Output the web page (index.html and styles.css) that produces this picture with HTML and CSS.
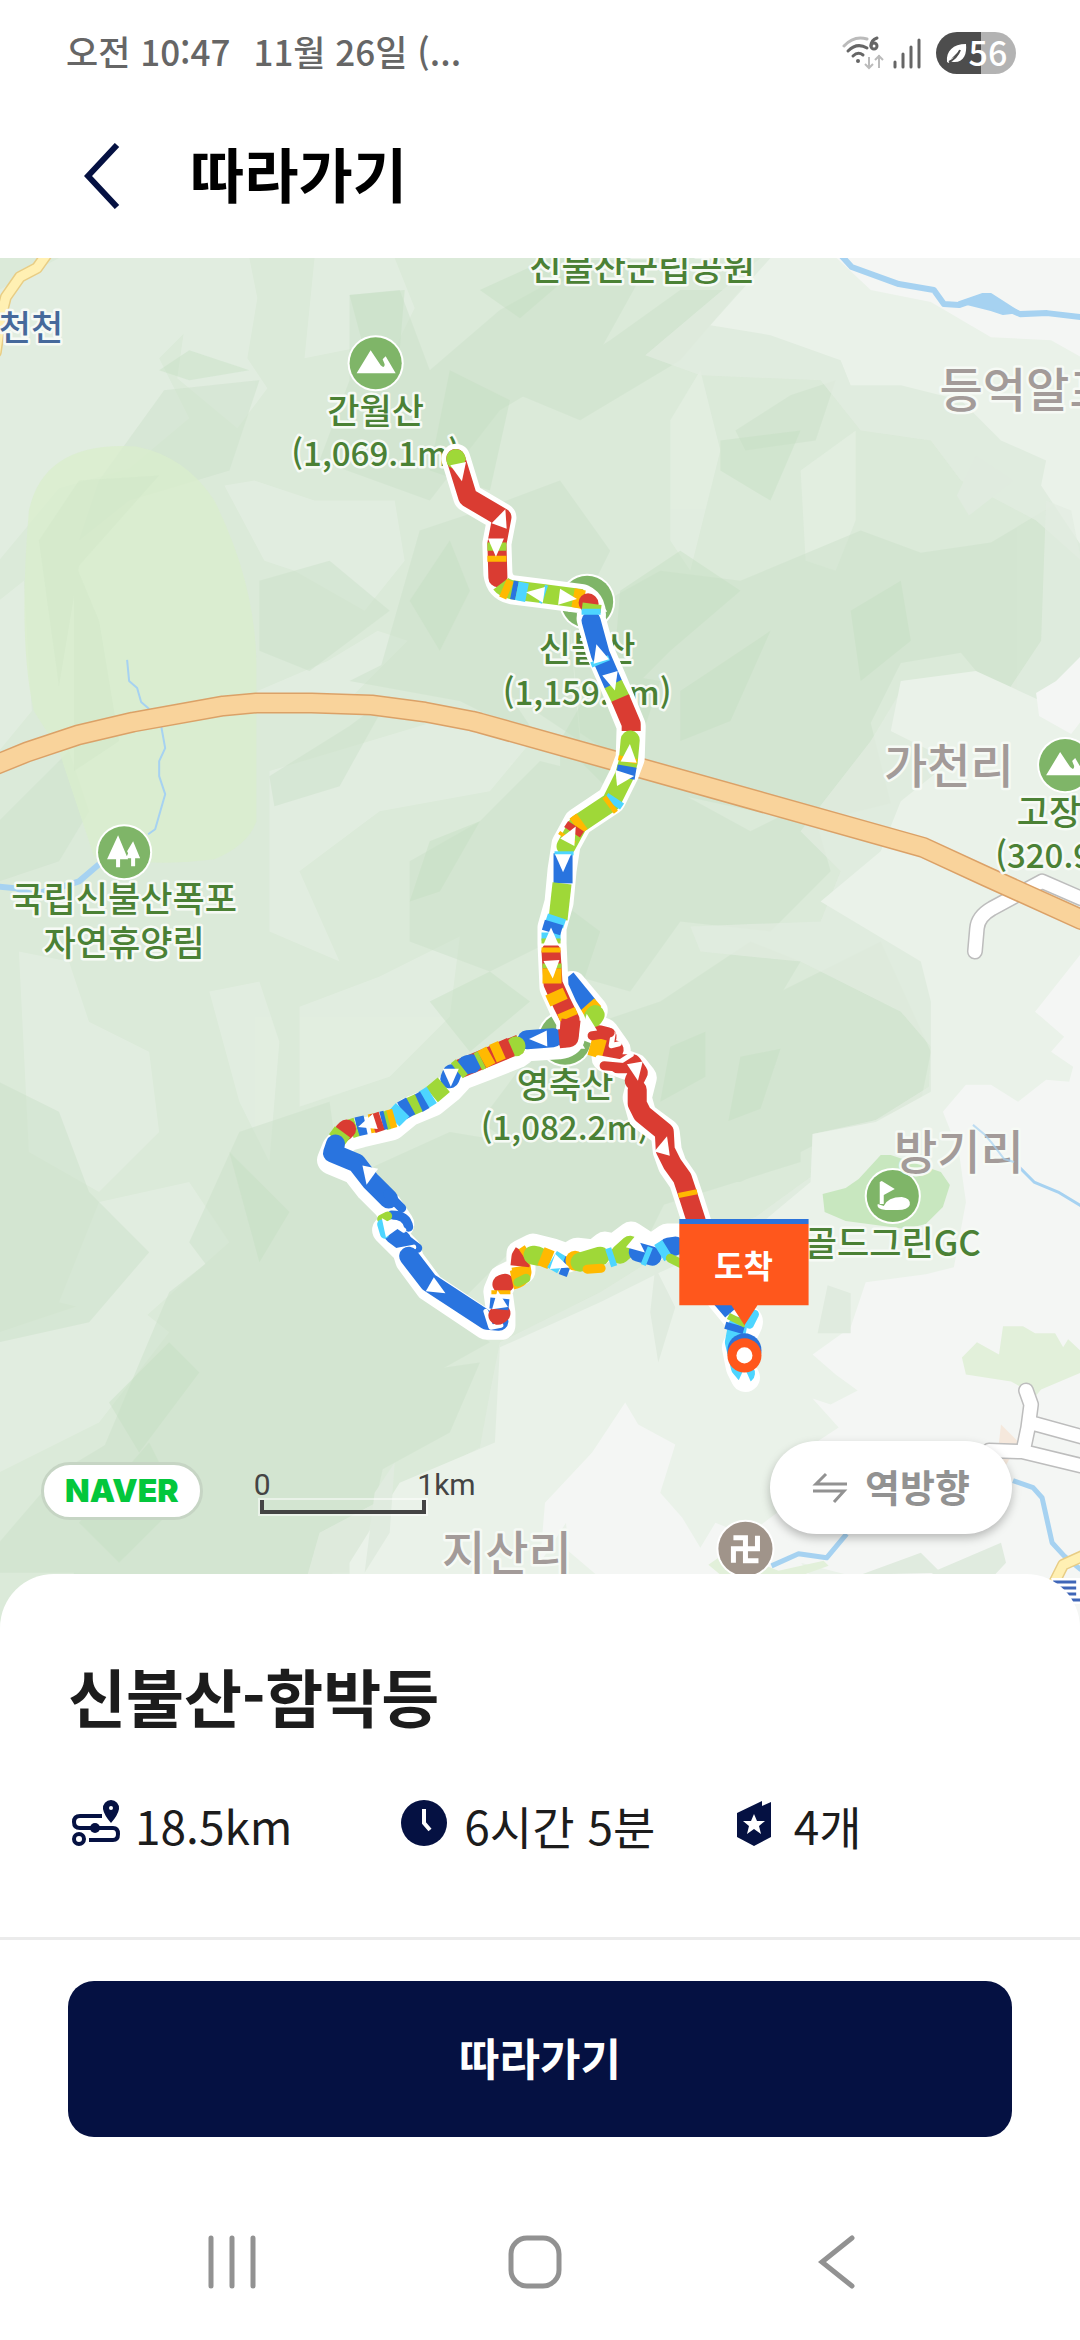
FILE: index.html
```html
<!DOCTYPE html>
<html lang="ko">
<head>
    <meta charset="UTF-8">
    <meta name="viewport" content="width=device-width, initial-scale=1.0">
    <title>따라가기</title>
    <link rel="stylesheet" href="styles.css">
</head>
<body>
    <div class="status-bar">
        <div class="status-time"><span>오전 10:47</span><span>11월 26일 (...</span></div>
        <div class="status-icons">
            <svg class="wifi" viewBox="0 0 42 36" aria-hidden="true">
                <g fill="none" stroke="#666" stroke-width="3" stroke-linecap="round">
                    <path d="M2 11Q12 0 25 4" stroke="#bbb"/>
                    <path d="M6 16Q15 7 25 13"/>
                    <path d="M11 21Q16 16 21 20"/>
                    <path d="M35 3Q29 5 29 11" />
                    <circle cx="32" cy="11" r="3"/>
                </g>
                <circle cx="16" cy="26" r="2" fill="#666"/>
                <path d="M27 22v11m-4-4 4 4 4-4M37 33V20m-4 5 4-4 4 4" fill="none" stroke="#bbb" stroke-width="2"/>
            </svg>
            <svg class="signal" viewBox="0 0 28 32" aria-hidden="true">
                <path d="M2 25v5M10 17v13M18 10v20M26 3v27" stroke="#666" stroke-width="3" stroke-linecap="round"/>
            </svg>
            <div class="battery">
                <svg viewBox="0 0 24 24" aria-hidden="true">
                    <path d="M2 21C1 10 8 3 21 3c1 10-2 19-13 18l-3-1-1 2zM6 18Q13 15 15 9" fill="#fff"/>
                    <path d="M4 21Q12 17 15 9" fill="none" stroke="#4d4d4d" stroke-width="2"/>
                </svg>
                <span>56</span>
            </div>
        </div>
    </div>

    <header class="header">
        <button class="back-btn" aria-label="뒤로">
            <svg viewBox="0 0 36 66" aria-hidden="true"><path d="M33 2 4 33l29 31" fill="none" stroke="#051142" stroke-width="6"/></svg>
        </button>
        <h1>따라가기</h1>
    </header>

    <main class="map">
        <svg class="map-canvas" viewBox="0 258 1080 1374" preserveAspectRatio="xMidYMin slice" role="img" aria-label="등산 경로 지도">
            <defs>
                <path id="arrow" d="M0-10 8 8H-8z" fill="#fff"/>
                <g id="poi">
                    <circle r="28" fill="#fff"/>
                    <circle r="26" fill="#7fb568"/>
                </g>
                <g id="peak">
                    <use href="#poi"/>
                    <path d="M-19 10-5-13 5 2Q9 6 9 1L7-4l3-3 10 17z" fill="#fff"/>
                </g>
            </defs>

            <!-- terrain -->
            <rect y="258" width="1080" height="1374" fill="#dbead9"/>
            <g class="light">
                <path d="M0 290 60 258h130l10 60-40 40 30 60-60 50-70 20L0 560z"/>
                <path d="M190 258h60l8 40-10 60 20 30-30 40-60-50 10-70z"/>
                <path d="M315 258h80l20 50-30 60-30-20-50 10 5-50z"/>
                <path d="M225 485l30-5 60 20 80 0 10 60-40 50-70-40-30-10z"/>
                <path d="M258 690l70-30 50-30 30 10-60 60-90 10z"/>
                <path d="M270 770l200-60 70 20-50 60-110 20-80 60 40 90-70-30z"/>
                <path d="M210 990l50-10 20 60-10 120-30-60zM300 1005l80-30 80-40-10 80-60 60-90 30z"/>
                <path d="M20 950l50 10 20 60 60 30 10 80-60 60-70-40z"/>
                <path d="M100 1200l90-20 40 60-90 80-80-20z"/>
                <path d="M0 1330l120-40 50 40-70 90-100 50z"/>
                <path d="M670 420l30-50 20 80-30 120-20-30zM800 470l55-40 0 90-20 50-30-10z"/>
                <path d="M0 600l25-20 8 130-33 40z"/>
            </g>
            <g class="dark">
                <path d="M165 390l95-10-30 90-100 30-50 40 20-60z"/>
                <path d="M350 295l50-5 30 80 70-60 90-50h60l-50 90-100 60-70 90-110-40 30-80z"/>
                <path d="M420 530l60-20 80-30 50 70-40 80 10 110-60-40-90-40-50 10z"/>
                <path d="M260 580l70-20 60 50-80 60-50-20z"/>
                <path d="M350 680l120-60 30 60 40 60-80-40z"/>
                <path d="M270 775l80-50 40-30-50 90-65 20z"/>
                <path d="M410 860l70-40 60-60 80 20-60 80-10 80-60 30-80-30z"/>
                <path d="M560 750l80 20 110 60 60-30 20 70-60 60-90-10-50 70-70-20z"/>
                <path d="M570 620l90-50 80 10 120-50 60 22 70-10 100-60 20 30v110l-30 70-70 20-50-60-60 10-30 60 20 80-80 20-140-30-90-60z"/>
                <path d="M540 1040l120-40 90-60 50 20-60 100 60 40 0 60-160 50-70-30-90-60z"/>
                <path d="M740 1010l140-70 50 110-10 50-100 40-80 40-60 0z"/>
                <path d="M340 1180l110-50 120 20 100 40-30 60-130 0-60 60-80-60z"/>
                <path d="M0 1080l60 30 30 80 60 60-60 70-90 20z"/>
                <path d="M240 1130l90-30 10 70 60 100 90 70-90 50-40 180H0v-30l60-70 100-60 90-90-60-80z"/>
                <path d="M170 1290l90-70 90 90 60 60 70-10-30 70-110 60-10 110H70l20-120z"/>
                <path d="M0 820l70-70 20 60-30 50-60 20z"/>
                <path d="M520 395l90-55 70-50 60 0-60 70-100 60zM735 430l55-35 45-15-20 60-70 10z"/>
            </g>
            <g class="darker">
                <path d="M350 295l55-5-5 60-30 20zM190 350l60 20-60 10-30-10z"/>
                <path d="M720 440l80-10-30 70-50-30zM620 590l60-40 60 40-70 60-60 60z"/>
                <path d="M600 670l60 10-40 120-60-60zM680 690l90-60-40 90-50 20z"/>
                <path d="M480 290l70-32h40l-70 60z"/>
                <path d="M430 1000l60-30 40 30-60 50zM560 900l40 30-30 90z"/>
                <path d="M110 1400l60-60 30 30-60 80zM230 1150l60 60-30 50z"/>
                <path d="M80 1520l70-80 30 60-60 60z"/>
                <path d="M670 1045l35-15v45l-45 25zM740 1055l40-8-20 60-32 12z"/>
                <path d="M410 600l40-60 20 50-30 60zM450 370l60 30-20 90-60-20z"/>
                <path d="M850 610l50-30 10 60-50 40zM430 840l50-20-40 70-30 10z"/>
            </g>

            <!-- eastern lowland -->
            <path class="rise" d="M760 258 645 355 700 375 820 380 860 430 930 440 960 480 1035 520 1080 560V258z"/>
            <path class="low" d="M770 258 710 325 770 335 840 360 850 385 900 385 960 400 1000 440 1045 460 1040 485 1080 545V258z"/>
            <path class="rise" d="M1080 560 1070 510 1045 500 1040 640 1000 700 900 690 870 740 800 830 840 870 820 920 690 925 700 950 800 960 900 1010 930 1045 928 1085 875 1118 812 1132 810 1175 755 1215 680 1240 600 1290 500 1340 490 1390 480 1445 320 1530 300 1600 340 1632H1080z"/>
            <path class="low" d="M1080 690 1040 700 975 670 900 680 890 730 950 760 900 800 880 850 820 900 870 930 920 960 930 1000 930 1090 875 1120 812 1132 810 1180 750 1230 660 1270 600 1300 500 1345 495 1440 400 1480 350 1560 350 1632H1080z"/>
            <path class="plain" d="M836 258 870 290 930 302 990 337 1050 340 1080 357V258z"/>
            <path class="plain" d="M1080 655 1055 680 1035 692 1038 715 1070 733 1080 720zM1080 952 1034 1010 1063 1035 1050 1050 1072 1065 1068 1080 1045 1078 1017 1100 990 1083 965 1083 942 1110 958 1150 965 1200 953 1265 925 1272 865 1280 850 1325 812 1352 835 1372 857 1388 830 1402 812 1396 838 1425 800 1450 790 1500 730 1545 800 1560 1080 1632z"/>
            <path class="plain" d="M545 1500 592 1450 625 1400 638 1422 675 1442 660 1490 682 1515 700 1545 715 1520 740 1530 780 1530 850 1632H590L600 1575 568 1548 566 1520 540 1560z"/>
            <path class="low-dark" d="M827 1283l23 8v40l-33 0zM655 1265l20 40-17 55-8-50zM930 1570l70-30 5 20-30 32zM975 455l38 25-45 35-12-20z"/>
            <path class="low-dark" d="M365 1570l10-80 20-30-5 70zM860 1572l60-22 20 20z"/>
            <path d="M137 446q50 10 78 54 40 80 42 160v160q-8 24-42 38-60 8-120-3l-35-105-25-40q-16-70-5-200 15-70 107-64z" fill="#d9edcc" opacity=".75"/>
            <path d="M40 540l40-60 80-5-80 90-20 120zM75 560l25 60 20 120-45 30z" fill="#cfe5c6" opacity=".35"/>
            <path d="M822 1192l23-6 13-9 22-24h10l50 17 9 13-7 22-17 17-20 5-60-8-21-9z" fill="#c8e7bf"/>
            <path d="M961 1355l15-15 22 12 4-28 20 0 12 7h20l8 14 5-8 13 12v21l-40 17-5 6-25-14-45-7z" fill="#e2f0da"/>
            <path d="M708 1562l20-14 50 20 45-10 5 5-25 9H720z" fill="#e2f0da"/>
            <path d="M1000 1422l18 18-14 24-6-24z" fill="#f5e8dc"/>

            <!-- water -->
            <g class="water">
                <path d="M841 256l10 11 47 17 35 6 10 14 15 1 23-8 38 17 27-1 34 4" stroke-width="6"/>
                <path d="M958 302l23-8h9l28 18-16 2-12-4z" class="pond" stroke-width="2"/>
                <path d="M128 659l2 21 8 7 4 14 8 7M162 725l4 22-6 13v15l6 18-10 35-7 5" stroke-width="2"/>
                <path d="M-2 885l20 2 15 6 25-6 22-7 20-17" stroke-width="6"/>
                <path d="M1012 1478l20 7 9 10 10 45 12 13 17 14M846 1531l-20 24-28-4-27 12" stroke-width="5"/>
                <path d="M1013 1160l20 20 24 10 23 14" stroke-width="3"/>
            </g>

            <!-- roads -->
            <g class="road">
                <path class="road-edge" d="M1080 897l-39-17-50 27q-14 8-15 20l-2 23M1025 1388l5 14-3 23-5 24-34-1M1022 1449l58 14M1029 1420l51 14"/>
                <path class="road-fill" d="M1080 897l-39-17-50 27q-14 8-15 20l-2 23M1025 1388l5 14-3 23-5 24-34-1M1022 1449l58 14M1029 1420l51 14"/>
                <path class="minor-edge" d="M48 254 38 268l-17 9-14 20-5 20-5 35M1084 1552l-22 10-10 20"/>
                <path class="minor-fill" d="M48 254 38 268l-17 9-14 20-5 20-5 35M1084 1552l-22 10-10 20"/>
                <path class="highway-edge" d="M-4 764 28 751 79 734l55-13 90-16 33-3h55l60 2 53 7 47 9 8 2 132 37 310 87 63 29 95 43"/>
                <path class="highway-fill" d="M-4 764 28 751 79 734l55-13 90-16 33-3h55l60 2 53 7 47 9 8 2 132 37 310 87 63 29 95 43"/>
            </g>
            <path d="M1050 1575h32v26h-20z" fill="#fff"/>
            <path d="M1052 1579h23M1056 1585h19M1062 1591h13M1068 1597h11" stroke="#3f66b8" stroke-width="3"/>

            <!-- points of interest -->
            <use href="#peak" x="376" y="363"/>
            <use href="#peak" x="587" y="601"/>
            <use href="#peak" x="565" y="1037"/>
            <use href="#peak" x="1064" y="764"/>
            <use href="#poi" x="125" y="851"/>
            <path d="M119 834l10 24h-8v8h-4v-8h-9zM134 840l7 17h-5v8h-4v-8h-5l2-5-1-2z" fill="#fff"/>
            <use href="#poi" x="892" y="1194"/>
            <path d="M881 1179l13 8-11 6v9h-4v-22zM883 1204q4-9 18-9 9 1 8 8-2 5-12 5h-12q-10-1-8-6z" fill="#fff"/>
            <circle cx="745" cy="1546" r="29" fill="#fff"/>
            <circle cx="745" cy="1546" r="27" fill="#a0948a"/>
            <path d="M733 1535h12v23h13M757 1533v13h-24v14" fill="none" stroke="#fff" stroke-width="5"/>

            <g class="label green">
                <text x="642" y="281">신불산군립공원</text>
                <text x="376" y="424">간월산</text>
                <text class="elevation" x="376" y="466">(1,069.1m)</text>
                <text x="587" y="661">신불산</text>
                <text class="elevation" x="587" y="704">(1,159.3m)</text>
                <text x="565" y="1096">영축산</text>
                <text class="elevation" x="565" y="1138">(1,082.2m)</text>
                <text x="125" y="911">국립신불산폭포</text>
                <text x="125" y="954">자연휴양림</text>
                <text x="1064" y="824">고장산</text>
                <text class="elevation" x="1064" y="867">(320.9m)</text>
                <text x="892" y="1254">골드그린GC</text>
            </g>
            <g class="label blue"><text x="32" y="341">천천</text></g>
            <g class="label village">
                <text x="1025" y="407">등억알프</text>
                <text x="948" y="782">가천리</text>
                <text x="958" y="1167">방기리</text>
                <text x="507" y="1567">지산리</text>
            </g>
            <path d="M972 1123l11 9 7 8 13 17 10 3" class="creek"/>

            <!-- route: eastern ridge -->
            <g class="route">
                <path class="case" d="M572 984l21 25-5 16 16 6 12 17-10 8 28 10 8 10-5 20 5 18 23 17 2 18 5 14 11 16 5 15 9 28"/>
                <path class="r" d="M599 1033l8 2M614 1048l-4 1M618 1062l14 0 6 9-4 8M637 1088l0 14 5 10 22 18 1 18 7 14 10 14 5 15 9 28"/>
                <path class="b butt" d="M566 977l22 27"/>
                <path class="o butt" d="M587 1003l7 8"/>
                <path class="g" d="M595 1013l-2 3"/>
                <path class="o butt" d="M590 1044l14 4"/>
                <path class="gap" d="M613 1032l-2 12 8-2M598 1056l22 4 11-7"/>
                <path class="o butt" d="M687 1189l1 5"/>
                <path class="r thin" d="M592 1034l18 -3M604 1064l22 2"/>
            </g>

            <!-- route: finish -->
            <g class="route">
                <path class="case" d="M720 1295l18 22q14-3 8 8l-10 20 4 20 5 10"/>
                <path class="c" d="M737 1324l-3 16 6 25 5 6"/>
                <path class="b butt" d="M720 1295l12 14M735 1322l-2 7"/>
                <path class="g butt" d="M738 1315l-3 6"/>
                <path class="c thin" d="M754 1312l-5 10"/>
            </g>

            <!-- route: main loop -->
            <g class="route">
                <path class="case" d="M456 458l12 39 34 20-5 26 1 30q2 13 14 16l32 4 38 5q11 5 9 20l9 33 13 30 18 44-1 32-6 16-13 26-33 22-12 22-4 26-3 32-7 25v16l2 44 9 20 8 14-1 17q-2 5-11 6l-32 2-10 7-30 12-26 10-12 13-16 13-24 10-17 14-30 7-15 4-10 11-5 12 24 10 14 18 18 18 12 18-13 6 20 20 3 10 20 27 57 38h14l0-12-3-22 5-12 18-9 0-16 12-6 20 5 14 5 10-6 18 2 10-8 10 2 16-12 20 13 16-11 16 0"/>
                <path class="r" d="M456 458l12 39 34 20-5 26 1 34"/>
                <path class="g butt" d="M456 458l1 4M497 542l0 8M501 583q3 4 11 6l32 4 38 5"/>
                <path class="g" d="M456 458v1"/>
                <path class="o butt" d="M497 555v6M503 587l7 3"/>
                <path class="b butt" d="M512 589l5 1"/>
                <path class="c butt" d="M517 590l10 2M542 593l3 1"/>
                <path class="o butt" d="M573 597l11 2"/>
                <path class="r" d="M588 602l1 1"/>
                <path class="g butt" d="M592 603l-1 8"/>
                <path class="b" d="M591 620l9 33 13 30"/>
                <path class="c butt" d="M591 608v6M599 658l2 5"/>
                <path class="g butt" d="M613 683l8 16"/>
                <path class="r butt" d="M620 697l11 26v7"/>
                <path class="g" d="M630 739l-2 22-4 14-13 26-33 22-12 22"/>
                <path class="o butt" d="M628 756l-1 5"/>
                <path class="b butt" d="M627 765l-2 12"/>
                <path class="c butt" d="M616 797l-4 6"/>
                <path class="o butt" d="M612 802l-4 3M582 820l-7 5M568 835l-2 3"/>
                <path class="r butt" d="M576 825l-4 6"/>
                <path class="b butt" d="M563 852v30"/>
                <path class="c butt" d="M564 850v4"/>
                <path class="g butt" d="M562 882l-4 36"/>
                <path class="c butt" d="M557 915l-3 9M551 931v8"/>
                <path class="b butt" d="M554 921l-3 10"/>
                <path class="r" d="M551 950l2 32 9 20 8 16-1 15-4 3"/>
                <path class="g butt" d="M551 937v5M552 962v5"/>
                <path class="o butt" d="M551 946v5M552 967v15M554 990l5 11M566 1009l3 7"/>
                <path class="b" d="M553 1036l-26 2"/>
                <path class="r butt" d="M571 1018l-2 18-10 1"/>
                <path class="r butt" d="M520 1042l-60 25"/>
                <path class="g" d="M516 1044v1"/>
                <path class="r butt" d="M511 1045l-9 4"/>
                <path class="o butt" d="M502 1048l-9 4M491 1053l-9 5"/>
                <path class="b" d="M472 1062l-5 1M452 1072l-2 5"/>
                <path class="g butt" d="M482 1058l-4 2M462 1065l-5 4M444 1083l-12 10"/>
                <path class="c butt" d="M432 1093l-8 5"/>
                <path class="b butt" d="M425 1098l-7 4"/>
                <path class="g butt" d="M419 1101l-9 4"/>
                <path class="b butt" d="M411 1104l-9 5"/>
                <path class="c butt" d="M403 1108l-10 10"/>
                <path class="o butt" d="M395 1116l-7 2M375 1121l-5 1"/>
                <path class="g butt" d="M389 1118l-4 1"/>
                <path class="b butt" d="M386 1118l-4 1M366 1123l-9 2"/>
                <path class="r butt" d="M382 1119l-9 3"/>
                <path class="g butt" d="M357 1125l-6 2"/>
                <path class="r" d="M347 1127l-3 3"/>
                <path class="g butt" d="M343 1130l-6 8"/>
                <path class="b" d="M336 1142l-3 9 24 10 14 18 18 18"/>
                <path class="b thin" d="M388 1192l14 14M392 1213q15 0 17 12M392 1226l26 20"/>
                <path class="b" d="M394 1232l8 6"/>
                <path class="gap" d="M392 1220l12 8M398 1248l16-3"/>
                <path class="g thin" d="M382 1217l6-3"/>
                <path class="c thin" d="M382 1222l3 10"/>
                <path class="b" d="M409 1254l20 26 58 38 12 1"/>
                <path class="gap" d="M486 1309l5 16 10-2"/>
                <path class="r" d="M501 1311l-3 2M502 1282l3-1"/>
                <path class="b butt" d="M500 1296l-1 11"/>
                <path class="o butt" d="M501 1288l0 4M512 1278q9-2 10-8l-1-6"/>
                <path class="g thin" d="M518 1280l8-4"/>
                <path class="r butt" d="M520 1264l1-9 3-5"/>
                <path class="o butt" d="M524 1255l6-4"/>
                <path class="g" d="M533 1253l5 1"/>
                <path class="o butt" d="M541 1254l10 4"/>
                <path class="c butt" d="M552 1257l10 6"/>
                <path class="b butt" d="M562 1263l8 3"/>
                <path class="o" d="M575 1259v-1"/>
                <path class="g" d="M580 1260l20-6M620 1252l10-9"/>
                <path class="o thin" d="M587 1267l14-1"/>
                <path class="c butt" d="M608 1256l6-2"/>
                <path class="b" d="M638 1250l14 4M668 1245l7-1"/>
                <path class="c butt" d="M644 1253l5 2M659 1251l8-5"/>
                <path class="g thin" d="M670 1256l12 6"/>
            </g>

            <!-- direction marks -->
            <use href="#arrow" transform="translate(460 471) rotate(168)"/>
            <use href="#arrow" transform="translate(502 518) rotate(20)"/>
            <use href="#arrow" transform="translate(496 546) rotate(180)"/>
            <use href="#arrow" transform="translate(536 593) rotate(-82)"/>
            <use href="#arrow" transform="translate(567 597) rotate(97)"/>
            <use href="#arrow" transform="translate(599 653) rotate(-16)"/>
            <use href="#arrow" transform="translate(612 680) rotate(164)"/>
            <use href="#arrow" transform="translate(629 753) rotate(4)"/>
            <use href="#arrow" transform="translate(624 776) rotate(84)"/>
            <use href="#arrow" transform="translate(571 834) rotate(28)"/>
            <use href="#arrow" transform="translate(563 861) rotate(180)"/>
            <use href="#arrow" transform="translate(551 936)"/>
            <use href="#arrow" transform="translate(552 967) rotate(176)"/>
            <use href="#arrow" transform="translate(588 1022) rotate(-8)"/>
            <use href="#arrow" transform="translate(539 1037) rotate(-92)"/>
            <use href="#arrow" transform="translate(451 1075) rotate(180)"/>
            <use href="#arrow" transform="translate(368 1122) rotate(-108)"/>
            <use href="#arrow" transform="translate(369 1173) rotate(-168)"/>
            <use href="#arrow" transform="translate(388 1224) rotate(-36)"/>
            <use href="#arrow" transform="translate(437 1286) rotate(120)"/>
            <use href="#arrow" transform="translate(499 1298) rotate(-8)"/>
            <use href="#arrow" transform="translate(560 1262) rotate(110)"/>
            <use href="#arrow" transform="translate(637 1244) rotate(130)"/>
            <use href="#arrow" transform="translate(636 1069) rotate(170)"/>
            <use href="#arrow" transform="translate(664 1144) rotate(16)"/>
            <use href="#arrow" transform="translate(744 1375)"/>

            <!-- arrival marker -->
            <circle cx="744" cy="1348" r="17" fill="#2b73da"/>
            <circle cx="744" cy="1353" r="17" fill="#ff571c"/>
            <circle cx="744" cy="1353" r="8" fill="#fff"/>
            <path d="M679 1217h129v5H679z" fill="#2b73da"/>
            <path d="M679 1222h129v81h-51l-13 20-13-20h-52z" fill="#ff571c"/>
            <text class="arrival" x="743" y="1276">도착</text>
        </svg>

        <div class="map-controls">
            <a class="naver" href="#">NAVER</a>
            <div class="scale">
                <div class="scale-text"><span>0</span><span>1km</span></div>
                <div class="scale-bar"></div>
            </div>
            <button class="reverse-btn">
                <svg viewBox="0 0 36 32" aria-hidden="true"><path d="M14 2 4 12h31M1 19h31L22 30" fill="none" stroke="#929292" stroke-width="3"/></svg>
                <span>역방향</span>
            </button>
        </div>
    </main>

    <section class="sheet">
        <h2>신불산-함박등</h2>
        <ul class="stats">
            <li>
                <svg viewBox="0 0 54 54" aria-hidden="true">
                    <path d="M34 18H12q-6 0-6 6t6 6h33q5 0 5 6t-5 6H21" transform="translate(0 2)" fill="none" stroke="#051142" stroke-width="4"/>
                    <circle cx="27" cy="32" r="5" fill="#051142"/>
                    <path d="M43 4a8 8 0 0 1 8 9q-1 6-8 14-7-8-8-14a8 8 0 0 1 8-9z" fill="#051142"/>
                    <circle cx="43" cy="12" r="2" fill="#fff"/>
                    <circle cx="11" cy="43" r="5" fill="none" stroke="#051142" stroke-width="4"/>
                </svg>
                <span>18.5km</span>
            </li>
            <li>
                <svg viewBox="0 0 54 54" aria-hidden="true">
                    <circle cx="27" cy="27" r="23" fill="#051142"/>
                    <path d="M27 13v14l6 7" fill="none" stroke="#fff" stroke-width="4"/>
                </svg>
                <span>6시간 5분</span>
            </li>
            <li>
                <svg viewBox="0 0 54 54" aria-hidden="true">
                    <path d="M10 17 35 5v5l9-4v35L27 50 10 41z" fill="#051142"/>
                    <path d="m27 18 3 7h8l-6 5 2 8-7-5-7 5 2-8-6-5h8z" fill="#fff"/>
                </svg>
                <span>4개</span>
            </li>
        </ul>
    </section>

    <footer class="action">
        <button class="follow-btn">따라가기</button>
    </footer>

    <nav class="nav-bar">
        <button aria-label="최근 앱">
            <svg viewBox="0 0 54 56" aria-hidden="true"><path d="M5 4v48M26 4v48M47 4v48" stroke="#929292" stroke-width="5" stroke-linecap="round"/></svg>
        </button>
        <button aria-label="홈">
            <svg viewBox="0 0 54 56" aria-hidden="true"><rect x="3" y="4" width="48" height="48" rx="16" fill="none" stroke="#929292" stroke-width="5"/></svg>
        </button>
        <button aria-label="이전">
            <svg viewBox="0 0 54 56" aria-hidden="true"><path d="M42 4 12 28l30 24" fill="none" stroke="#929292" stroke-width="5" stroke-linecap="round"/></svg>
        </button>
    </nav>
</body>
</html>
```
FILE: styles.css
```css
* {
    margin: 0;
    padding: 0;
    box-sizing: border-box;
}

body {
    display: flex;
    flex-direction: column;
    min-height: 100vh;
    background-color: #fff;
    color: #1c1c1c;
    font-family: "Noto Sans CJK KR", sans-serif;
}

button {
    border: none;
    background: none;
    font-family: inherit;
    cursor: pointer;
}

svg {
    display: block;
}

/* Status bar */
.status-bar {
    display: flex;
    justify-content: space-between;
    align-items: center;
    height: 106px;
    padding: 0 64px;
    color: #666;
    font-size: 35px;
    font-weight: 500;
}

.status-time {
    display: flex;
    gap: 23px;
    padding: 0 2px 5px;
}

.status-icons {
    display: flex;
    align-items: center;
    gap: 9px;
}

.wifi {
    width: 42px;
    height: 36px;
}

.signal {
    width: 28px;
    height: 32px;
}

.battery {
    display: flex;
    align-items: center;
    justify-content: center;
    width: 80px;
    height: 42px;
    margin-left: 6px;
    border-radius: 21px;
    background: linear-gradient(to right, #4d4d4d 56%, #b3b3b3 56%);
    color: #fff;
    font-size: 34px;
    line-height: 40px;
}

.battery span {
    padding-bottom: 3px;
}

.battery svg {
    width: 24px;
    height: 24px;
}

/* Header */
.header {
    display: flex;
    align-items: center;
    gap: 70px;
    height: 152px;
    padding: 0 84px 12px;
}

.back-btn svg {
    width: 36px;
    height: 66px;
}

h1 {
    padding-bottom: 6px;
    color: #000;
    font-size: 59px;
    line-height: 70px;
}

/* Map */
.map {
    position: relative;
    display: flex;
    flex: 1;
    align-items: flex-end;
    min-height: 600px;
    overflow: hidden;
}

.map-canvas {
    position: absolute;
    top: 0;
    left: 0;
    width: 100%;
    height: 100%;
}

.light { fill: #e6f0e5; opacity: 0.6; }
.dark { fill: #cde2cb; opacity: 0.5; }
.darker { fill: #c4dfc1; opacity: 0.4; }
.rise { fill: #e2ede1; opacity: 0.7; }
.low { fill: #eaf2e9; }
.low-dark { fill: #e0ebdf; }
.plain { fill: #f4f6f4; }

.water path,
.creek {
    fill: none;
    stroke: #a6d2f1;
    stroke-linejoin: round;
}

.water .pond {
    fill: #a6d2f1;
}

.creek {
    stroke-width: 2;
    opacity: 0.7;
}

.road path {
    fill: none;
    stroke-linecap: round;
    stroke-linejoin: round;
}

.road-edge { stroke: #bdbdbd; stroke-width: 16; }
.road-fill { stroke: #fff; stroke-width: 13; }
.minor-edge { stroke: #e8cd85; stroke-width: 12; }
.minor-fill { stroke: #fff0b3; stroke-width: 9; }
.highway-edge { stroke: #dba167; stroke-width: 21; }
.highway-fill { stroke: #f9d39b; stroke-width: 18; }

.label {
    font-size: 35px;
    font-weight: 500;
    text-anchor: middle;
    paint-order: stroke;
    stroke: #f6faf5;
    stroke-width: 5px;
    stroke-linejoin: round;
}

.elevation { font-size: 33px; }
.green { fill: #4b8135; }
.blue { fill: #46699b; }
.village { fill: #a39b99; font-size: 47px; }

.arrival {
    fill: #fff;
    font-size: 32px;
    font-weight: 700;
    text-anchor: middle;
}

.route path {
    fill: none;
    stroke-width: 19;
    stroke-linecap: round;
    stroke-linejoin: round;
}

.route .case { stroke: #fff; stroke-width: 29; }
.route .r { stroke: #da3c32; }
.route .b { stroke: #2974df; }
.route .c { stroke: #4dd5ff; }
.route .g { stroke: #9fd838; }
.route .o { stroke: #ffb901; }
.route .butt { stroke-linecap: butt; }
.route .thin { stroke-width: 9; }
.route .gap { stroke: #fff; stroke-width: 5; }

.map-controls {
    position: relative;
    display: flex;
    align-items: center;
    width: 100%;
    padding: 0 68px 101px 41px;
}

.naver {
    margin-top: 6px;
    padding: 0 21px;
    border: 3px solid #c6d5c4;
    border-radius: 30px;
    background-color: #fff;
    color: #03c73c;
    font-family: Inter, sans-serif;
    font-size: 32px;
    font-weight: 900;
    line-height: 52px;
    text-decoration: none;
}

.scale {
    width: 166px;
    margin-top: 8px;
    margin-left: 57px;
    color: #444;
    font-family: Roboto, sans-serif;
    font-size: 30px;
    line-height: 30px;
}

.scale-text {
    display: flex;
    justify-content: space-between;
    margin: 0 -50px 0 -6px;
}

.scale-bar {
    height: 14px;
    border: 4px solid #444;
    border-top: none;
    outline: 2px solid rgba(255, 255, 255, 0.5);
}

.reverse-btn {
    display: flex;
    align-items: center;
    justify-content: center;
    gap: 17px;
    width: 242px;
    height: 93px;
    margin-left: auto;
    border-radius: 47px;
    background-color: #fff;
    box-shadow: 0 4px 10px rgba(0, 0, 0, 0.25);
    color: #929292;
    font-size: 38px;
    font-weight: 700;
}

.reverse-btn span {
    padding-bottom: 5px;
}

.reverse-btn svg {
    width: 36px;
    height: 32px;
}

/* Bottom sheet */
.sheet {
    position: relative;
    margin-top: -61px;
    padding: 77px 68px 72px;
    border-radius: 54px 54px 0 0;
    background-color: #fff;
}

h2 {
    font-size: 63px;
    line-height: 88px;
}

.stats {
    display: grid;
    grid-template-columns: repeat(3, 1fr);
    gap: 44px;
    margin-top: 50px;
    list-style: none;
    font-size: 46px;
    line-height: 72px;
}

.stats li {
    display: flex;
    align-items: center;
    gap: 13px;
    white-space: nowrap;
}

.stats svg {
    width: 54px;
    height: 54px;
    margin-bottom: 8px;
}

.stats span {
    padding-bottom: 4px;
}

.action {
    padding: 41px 68px 42px;
    border-top: 3px solid #ebebeb;
}

.follow-btn {
    width: 100%;
    height: 156px;
    padding-bottom: 4px;
    border-radius: 26px;
    background-color: #051142;
    color: #fff;
    font-size: 44px;
    font-weight: 700;
}

/* System navigation */
.nav-bar {
    display: flex;
    height: 161px;
    padding: 5px 92px 0 82px;
}

.nav-bar button {
    display: flex;
    flex: 1;
    align-items: center;
    justify-content: center;
}

.nav-bar svg {
    width: 54px;
    height: 56px;
}
```
